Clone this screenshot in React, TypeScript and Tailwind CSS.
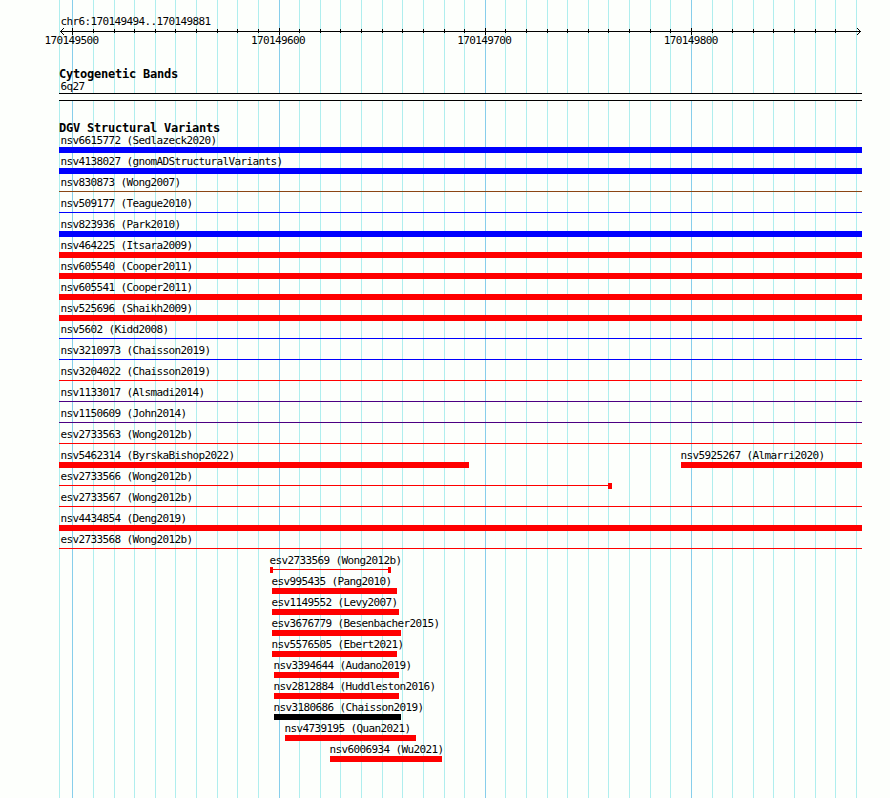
const MINOR = [
  59, 93, 114, 134, 155, 175, 196, 217, 237, 258, 299, 320, 340, 361, 382, 402, 423, 444, 464, 505, 526, 547, 567, 588,
  608, 629, 650, 670, 712, 732, 753, 773, 794, 815, 835, 856,
];
const MAJOR = [72, 279, 485, 691];

type Shape = "bar" | "line" | "lineEnd" | "lineBoth";
type Feature = { label: string; start: number; end: number; color: string; shape: Shape };

const RED = "#ff0000";
const BLUE = "#0000ff";
const INDIGO = "#4b0082";

const f = (label: string, color: string, shape: Shape = "bar", start = 59, end = 862): Feature => ({
  label,
  start,
  end,
  color,
  shape,
});

const ROWS: Feature[][] = [
  [f("nsv6615772 (Sedlazeck2020)", BLUE)],
  [f("nsv4138027 (gnomADStructuralVariants)", BLUE)],
  [f("nsv830873 (Wong2007)", "#8b4513", "line")],
  [f("nsv509177 (Teague2010)", BLUE, "line")],
  [f("nsv823936 (Park2010)", BLUE)],
  [f("nsv464225 (Itsara2009)", RED)],
  [f("nsv605540 (Cooper2011)", RED)],
  [f("nsv605541 (Cooper2011)", RED)],
  [f("nsv525696 (Shaikh2009)", RED)],
  [f("nsv5602 (Kidd2008)", BLUE, "line")],
  [f("nsv3210973 (Chaisson2019)", BLUE, "line")],
  [f("nsv3204022 (Chaisson2019)", RED, "line")],
  [f("nsv1133017 (Alsmadi2014)", INDIGO, "line")],
  [f("nsv1150609 (John2014)", INDIGO, "line")],
  [f("esv2733563 (Wong2012b)", RED, "line")],
  [f("nsv5462314 (ByrskaBishop2022)", RED, "bar", 59, 469), f("nsv5925267 (Almarri2020)", RED, "bar", 681, 862)],
  [f("esv2733566 (Wong2012b)", RED, "lineEnd", 59, 612)],
  [f("esv2733567 (Wong2012b)", RED, "line")],
  [f("nsv4434854 (Deng2019)", RED)],
  [f("esv2733568 (Wong2012b)", RED, "line")],
  [f("esv2733569 (Wong2012b)", RED, "lineBoth", 270, 391)],
  [f("esv995435 (Pang2010)", RED, "bar", 272, 397)],
  [f("esv1149552 (Levy2007)", RED, "bar", 272, 399)],
  [f("esv3676779 (Besenbacher2015)", RED, "bar", 272, 401)],
  [f("nsv5576505 (Ebert2021)", RED, "bar", 272, 397)],
  [f("nsv3394644 (Audano2019)", RED, "bar", 274, 399)],
  [f("nsv2812884 (Huddleston2016)", RED, "bar", 274, 399)],
  [f("nsv3180686 (Chaisson2019)", "#000000", "bar", 274, 401)],
  [f("nsv4739195 (Quan2021)", RED, "bar", 285, 416)],
  [f("nsv6006934 (Wu2021)", RED, "bar", 330, 442)],
];

function Grid() {
  return (
    <svg className="absolute inset-0" width="890" height="798" shapeRendering="crispEdges">
      {MINOR.map((x) => (
        <rect key={x} x={x} y="0" width="1" height="798" fill="#afeeee" />
      ))}
      {MAJOR.map((x) => (
        <rect key={x} x={x} y="0" width="1" height="798" fill="#87ceeb" />
      ))}
    </svg>
  );
}

function Ruler() {
  return (
    <svg className="block" width="890" height="7" shapeRendering="crispEdges">
      <rect x="60" y="3" width="801" height="1" />
      {MINOR.filter((x) => x > 59 && x < 856).map((x) => (
        <rect key={x} x={x} y="1" width="1" height="4" />
      ))}
      {MAJOR.map((x) => (
        <rect key={x} x={x} y="0" width="1" height="7" />
      ))}
      {[1, 2, 3].map((d) => (
        <g key={d}>
          <rect x={60 + d} y={3 - d} width="1" height="1" />
          <rect x={60 + d} y={3 + d} width="1" height="1" />
          <rect x={860 - d} y={3 - d} width="1" height="1" />
          <rect x={860 - d} y={3 + d} width="1" height="1" />
        </g>
      ))}
    </svg>
  );
}

function Glyph({ feature }: { feature: Feature }) {
  if (feature.shape === "bar") {
    return <div className="h-1.5" style={{ backgroundColor: feature.color }} />;
  }
  return (
    <div className="flex h-1.5">
      {feature.shape === "lineBoth" && <div className="w-[3px]" style={{ backgroundColor: feature.color }} />}
      <div className="mt-0.5 h-px flex-1" style={{ backgroundColor: feature.color }} />
      {feature.shape === "lineBoth" && <div className="w-[3px]" style={{ backgroundColor: feature.color }} />}
      {feature.shape === "lineEnd" && <div className="w-1" style={{ backgroundColor: feature.color }} />}
    </div>
  );
}

function Row({ features }: { features: Feature[] }) {
  return (
    <div className="flex h-[21px]">
      {features.map((feature, i) => (
        <div
          key={feature.label}
          className="shrink-0"
          style={{
            marginLeft: feature.start - (i > 0 ? features[i - 1].end : 0),
            width: feature.end - feature.start,
          }}
        >
          <div className={`h-3 whitespace-pre ${feature.start === 59 ? "ml-[1.5px]" : "-ml-[0.5px]"}`}>
            {feature.label}
          </div>
          <Glyph feature={feature} />
        </div>
      ))}
    </div>
  );
}

export default function App() {
  return (
    <div className="relative h-[798px] w-[890px] overflow-hidden bg-[#fdfffc] font-['DejaVu_Sans_Mono','Liberation_Mono',monospace] text-[11px] leading-[11px] tracking-[-0.622px] text-black">
      <Grid />
      <main className="relative flex flex-col">
        <div className="mt-4 ml-[60.5px] h-3">chr6:170149494..170149881</div>
        <Ruler />
        <div className="ml-[44.5px] flex h-[34px] gap-[152.4px]">
          {["170149500", "170149600", "170149700", "170149800"].map((t) => (
            <span key={t} className="w-[54px]">
              {t}
            </span>
          ))}
        </div>
        <h2 className="ml-[59px] h-3 text-[12px] leading-[11px] font-bold tracking-[-0.224px]">Cytogenetic Bands</h2>
        <div className="ml-[60.5px] h-3">6q27</div>
        <div className="ml-[59px] h-2 w-[803px] border-y border-black bg-[#fdfffc]" />
        <h2 className="mt-[22px] ml-[59px] h-3 text-[12px] leading-[11px] font-bold tracking-[-0.224px]">
          DGV Structural Variants
        </h2>
        <section>
          {ROWS.map((features) => (
            <Row key={features[0].label} features={features} />
          ))}
        </section>
      </main>
    </div>
  );
}
